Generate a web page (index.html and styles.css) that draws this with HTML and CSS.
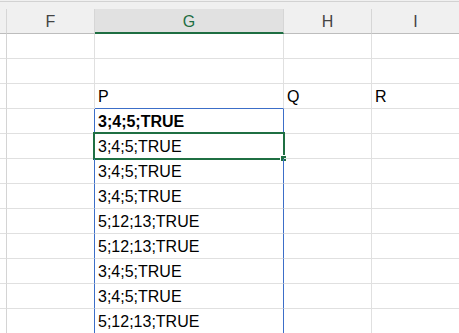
FILE: index.html
```html
<!DOCTYPE html>
<html>
<head>
<meta charset="utf-8">
<link rel="stylesheet" href="styles.css">
</head>
<body>
<div class="sheet">
  <div class="strip"></div>
  <div class="grid">
    <div class="hd corner"></div>
    <div class="hd">F</div>
    <div class="hd hd-sel">G</div>
    <div class="hd">H</div>
    <div class="hd">I</div>

    <div class="c lc"></div><div class="c"></div><div class="c"></div><div class="c"></div><div class="c"></div>
    <div class="c lc"></div><div class="c"></div><div class="c"></div><div class="c"></div><div class="c"></div>

    <div class="c lc"></div><div class="c"></div><div class="c spill-top">P</div><div class="c">Q</div><div class="c">R</div>

    <div class="c lc"></div><div class="c spill-left"></div><div class="c spill bold">3;4;5;TRUE</div><div class="c"></div><div class="c"></div>
    <div class="c lc"></div><div class="c spill-left"></div><div class="c spill active">3;4;5;TRUE<span class="sel"><span class="handle"></span></span></div><div class="c"></div><div class="c"></div>
    <div class="c lc"></div><div class="c spill-left"></div><div class="c spill">3;4;5;TRUE</div><div class="c"></div><div class="c"></div>
    <div class="c lc"></div><div class="c spill-left"></div><div class="c spill">3;4;5;TRUE</div><div class="c"></div><div class="c"></div>
    <div class="c lc"></div><div class="c spill-left"></div><div class="c spill">5;12;13;TRUE</div><div class="c"></div><div class="c"></div>
    <div class="c lc"></div><div class="c spill-left"></div><div class="c spill">5;12;13;TRUE</div><div class="c"></div><div class="c"></div>
    <div class="c lc"></div><div class="c spill-left"></div><div class="c spill">3;4;5;TRUE</div><div class="c"></div><div class="c"></div>
    <div class="c lc"></div><div class="c spill-left"></div><div class="c spill">3;4;5;TRUE</div><div class="c"></div><div class="c"></div>
    <div class="c lc"></div><div class="c spill-left"></div><div class="c spill">5;12;13;TRUE</div><div class="c"></div><div class="c"></div>
  </div>
</div>
</body>
</html>
```

FILE: styles.css
```css
* { box-sizing: border-box; }
html, body {
  margin: 0;
  padding: 0;
  background: #ffffff;
  overflow: hidden;
}
body {
  font-family: "Liberation Sans", Arial, sans-serif;
  font-size: 16px;
  color: #000;
}
.sheet {
  width: 459px;
  height: 333px;
  overflow: hidden;
  background: #f0f0f0;
  padding-top: 1px;
}
.strip {
  height: 8px;
  border-top: 1px solid #d2d2d2;
  background: #f0f0f0;
}
.grid {
  display: grid;
  grid-template-columns: 7px 88px 189px 88px 88px;
  grid-template-rows: repeat(13, 25px);
  background: #fff;
}
.hd {
  background: #f0f0f0;
  border-right: 1px solid #d6d6d6;
  border-bottom: 1px solid #bdbdbd;
  color: #444;
  text-align: center;
  line-height: 22px;
  padding-top: 2px;
}
.hd-sel {
  background: #e1e1e1;
  color: #1e6e42;
  border-bottom: 2px solid #1e6e42;
}
.corner {
  padding-top: 0;
}
.c {
  border-right: 1px solid #e0e0e0;
  border-bottom: 1px solid #e0e0e0;
  padding: 2px 0 0 3px;
  line-height: 22px;
  white-space: nowrap;
  position: relative;
}
.lc {
  border-right-color: #d4d4d4;
  padding: 0;
}
.spill-top {
  border-bottom-color: #3c6ec8;
}
.spill-left {
  border-right-color: #3c6ec8;
}
.spill {
  border-right-color: #3c6ec8;
}
.bold {
  font-weight: bold;
}
.sel {
  position: absolute;
  top: -2px;
  left: -2px;
  right: -2px;
  bottom: -2px;
  border: 2px solid #1f6f43;
}
.handle {
  position: absolute;
  right: -4px;
  bottom: -4px;
  width: 7px;
  height: 7px;
  background: #1f6f43;
  border: 1px solid #fff;
}
```
